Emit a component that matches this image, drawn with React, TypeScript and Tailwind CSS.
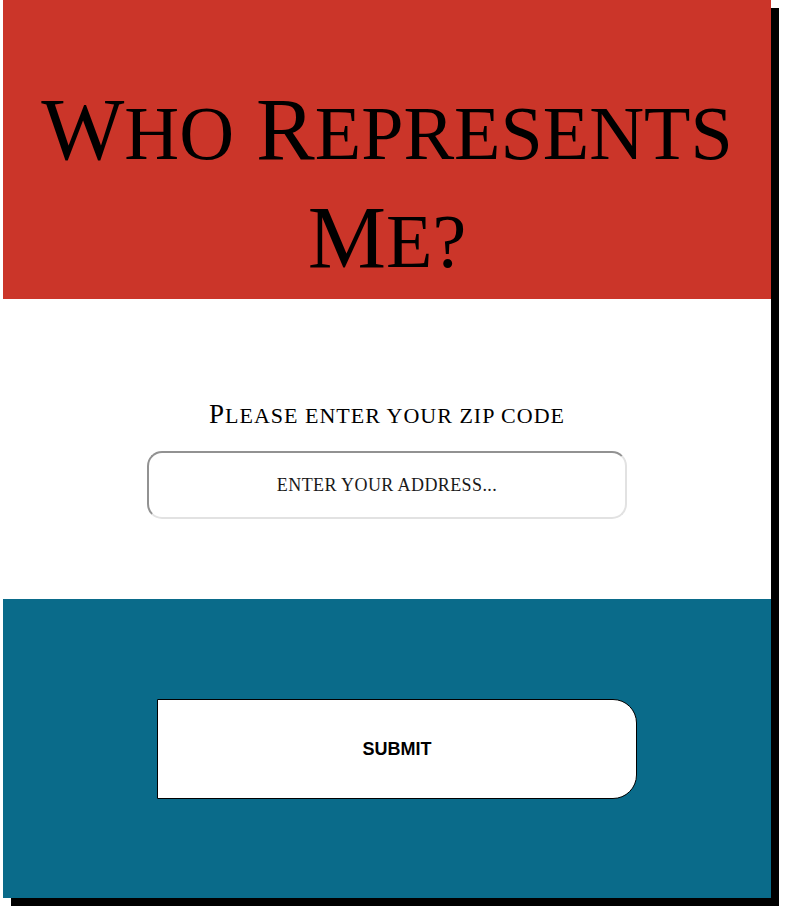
import React from "react";

const serif = { fontFamily: '"Liberation Serif", "Times New Roman", serif' };

export default function App() {
  return (
    <div className="min-h-[918px] bg-white">
      <div className="ml-[3px] w-[768px] shadow-[8px_8px_0_#000]">
        <header
          className="h-[299px] bg-[#cb3529] pt-[76px] text-center text-black"
          style={serif}
        >
          <h1 className="m-0 text-[88px] font-normal leading-[108px]">
            <span>W</span>
            <span className="text-[76px] uppercase leading-none">ho</span>{" "}
            <span>R</span>
            <span className="text-[76px] uppercase leading-none">epresents</span>
            <br />
            <span>M</span>
            <span className="text-[76px] uppercase leading-none">e?</span>
          </h1>
        </header>

        <section
          className="flex h-[300px] flex-col items-center bg-white pt-[99px]"
          style={serif}
        >
          <p className="m-0 text-[27px] leading-[32px] tracking-[1px] text-black">
            <span>P</span>
            <span className="text-[22px] uppercase leading-none">
              lease enter your zip code
            </span>
          </p>
          <input
            type="text"
            placeholder="enter your address..."
            className="mt-[21px] h-[68px] w-[480px] rounded-[15px] border-2 border-t-[#929292] border-l-[#929292] border-b-[#e2e2e2] border-r-[#e2e2e2] bg-white text-center text-[18px] uppercase tracking-[0.4px] text-black outline-none placeholder:uppercase placeholder:text-[#1a1a1a]"
            style={serif}
          />
        </section>

        <section className="h-[299px] bg-[#0a6b8a] pl-[154px] pt-[100px]">
          <button
            type="button"
            className="flex h-[100px] w-[480px] items-center justify-center rounded-r-[24px] border border-black bg-white text-[18px] font-bold text-black"
            style={{ fontFamily: '"Liberation Sans", Arial, sans-serif' }}
          >
            SUBMIT
          </button>
        </section>
      </div>
    </div>
  );
}
